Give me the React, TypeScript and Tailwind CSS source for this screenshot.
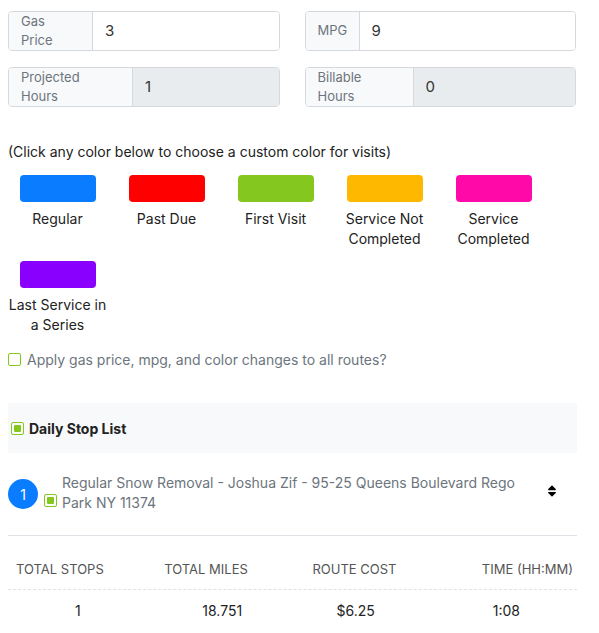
import { FaSort } from 'react-icons/fa';

const swatches = [
  { c: 'bg-[#0a7cff]', l: 'Regular' },
  { c: 'bg-[#ff0000]', l: 'Past Due' },
  { c: 'bg-[#84c71f]', l: 'First Visit' },
  { c: 'bg-[#ffb800]', l: 'Service Not Completed' },
  { c: 'bg-[#ff0aa8]', l: 'Service Completed' },
  { c: 'bg-[#8a00ff]', l: 'Last Service in a Series' },
];

function Field({ label, value, ro, lw }: { label: string; value: string; ro?: boolean; lw: string }) {
  return (
    <div className="flex h-10 flex-1 rounded border border-[#d5d8dc] overflow-hidden">
      <div className={`${lw} flex items-center px-3 bg-[#f8f9fa] border-r border-[#d5d8dc] text-[13px] text-[#6c757d]`}>{label}</div>
      <div className={`flex-1 flex items-center px-3 text-[15px] text-[#333] ${ro ? 'bg-[#e9ecef]' : 'bg-white'}`}>{value}</div>
    </div>
  );
}

function Box() {
  return (
    <span className="inline-flex w-[13px] h-[13px] items-center justify-center rounded-[2px] border border-[#84c71f] bg-white">
      <span className="w-[7px] h-[7px] rounded-[1px] bg-[#84c71f]" />
    </span>
  );
}

export default function App() {
  return (
    <div className="w-[599px] h-[633px] bg-white overflow-hidden text-[#222]" style={{ fontFamily: 'Inter, "Liberation Sans", sans-serif' }}>
      <div className="px-2 pt-[11px] flex flex-col gap-4">
        <div className="flex gap-[25px] pr-[15px]">
          <Field label="Gas Price" value="3" lw="w-[84px]" />
          <Field label="MPG" value="9" lw="w-[54px]" />
        </div>
        <div className="flex gap-[25px] pr-[15px]">
          <Field label="Projected Hours" value="1" ro lw="w-[124px]" />
          <Field label="Billable Hours" value="0" ro lw="w-[108px]" />
        </div>
      </div>
      <p className="mt-[34px] px-2 text-[14px]">(Click any color below to choose a custom color for visits)</p>
      <div className="grid grid-cols-[repeat(5,109px)] pl-[3px] mt-[13px] gap-y-[12px]">
        {swatches.map((s) => (
          <div key={s.l} className="flex flex-col items-center">
            <div className={`w-[76px] h-[27px] rounded ${s.c}`} />
            <div className="mt-[7px] text-center text-[14px] leading-[20px] px-1">{s.l}</div>
          </div>
        ))}
      </div>
      <label className="mt-[14px] px-2 flex items-center gap-[6px] text-[14px] text-[#6c757d]">
        <span className="w-[13px] h-[13px] rounded-[2px] border border-[#84c71f]" />
        Apply gas price, mpg, and color changes to all routes?
      </label>
      <div className="mx-2 mr-[22px] mt-[33px] h-[50px] bg-[#f8f9fa] flex items-center gap-[5px] px-[3px] text-[14px] font-bold">
        <Box />
        Daily Stop List
      </div>
      <div className="mx-2 mr-[22px] mt-[20px] pb-[22px] border-b border-[#dee2e6] flex items-start">
        <div className="w-[30px] h-[30px] mt-[6px] rounded-full bg-[#0a7cff] text-white text-[14px] flex items-center justify-center">1</div>
        <div className="mt-[13px] ml-[6px]"><Box /></div>
        <div className="ml-[5px] w-[460px] text-[14px] leading-[20px] text-[#6c757d]">Regular Snow Removal - Joshua Zif - 95-25 Queens Boulevard Rego Park NY 11374</div>
        <FaSort className="ml-auto mt-[11px] mr-[18px] text-[14px] text-black" />
      </div>
      <div className="mx-2 mr-[22px] mt-[24px] text-[13px]">
        <div className="grid grid-cols-4 text-[#555] uppercase pb-[9px] border-b border-dashed border-[#dee2e6] pl-2">
          <span>Total Stops</span><span className="pl-[8px]">Total Miles</span><span className="pl-[16px]">Route Cost</span><span className="text-right pr-1">Time (HH:MM)</span>
        </div>
        <div className="grid grid-cols-4 text-[14px] pt-[10px]">
          <span className="pl-[67px]">1</span><span className="pl-[52px]">18.751</span><span className="pl-[44px]">$6.25</span><span className="pl-[58px]">1:08</span>
        </div>
      </div>
    </div>
  );
}
